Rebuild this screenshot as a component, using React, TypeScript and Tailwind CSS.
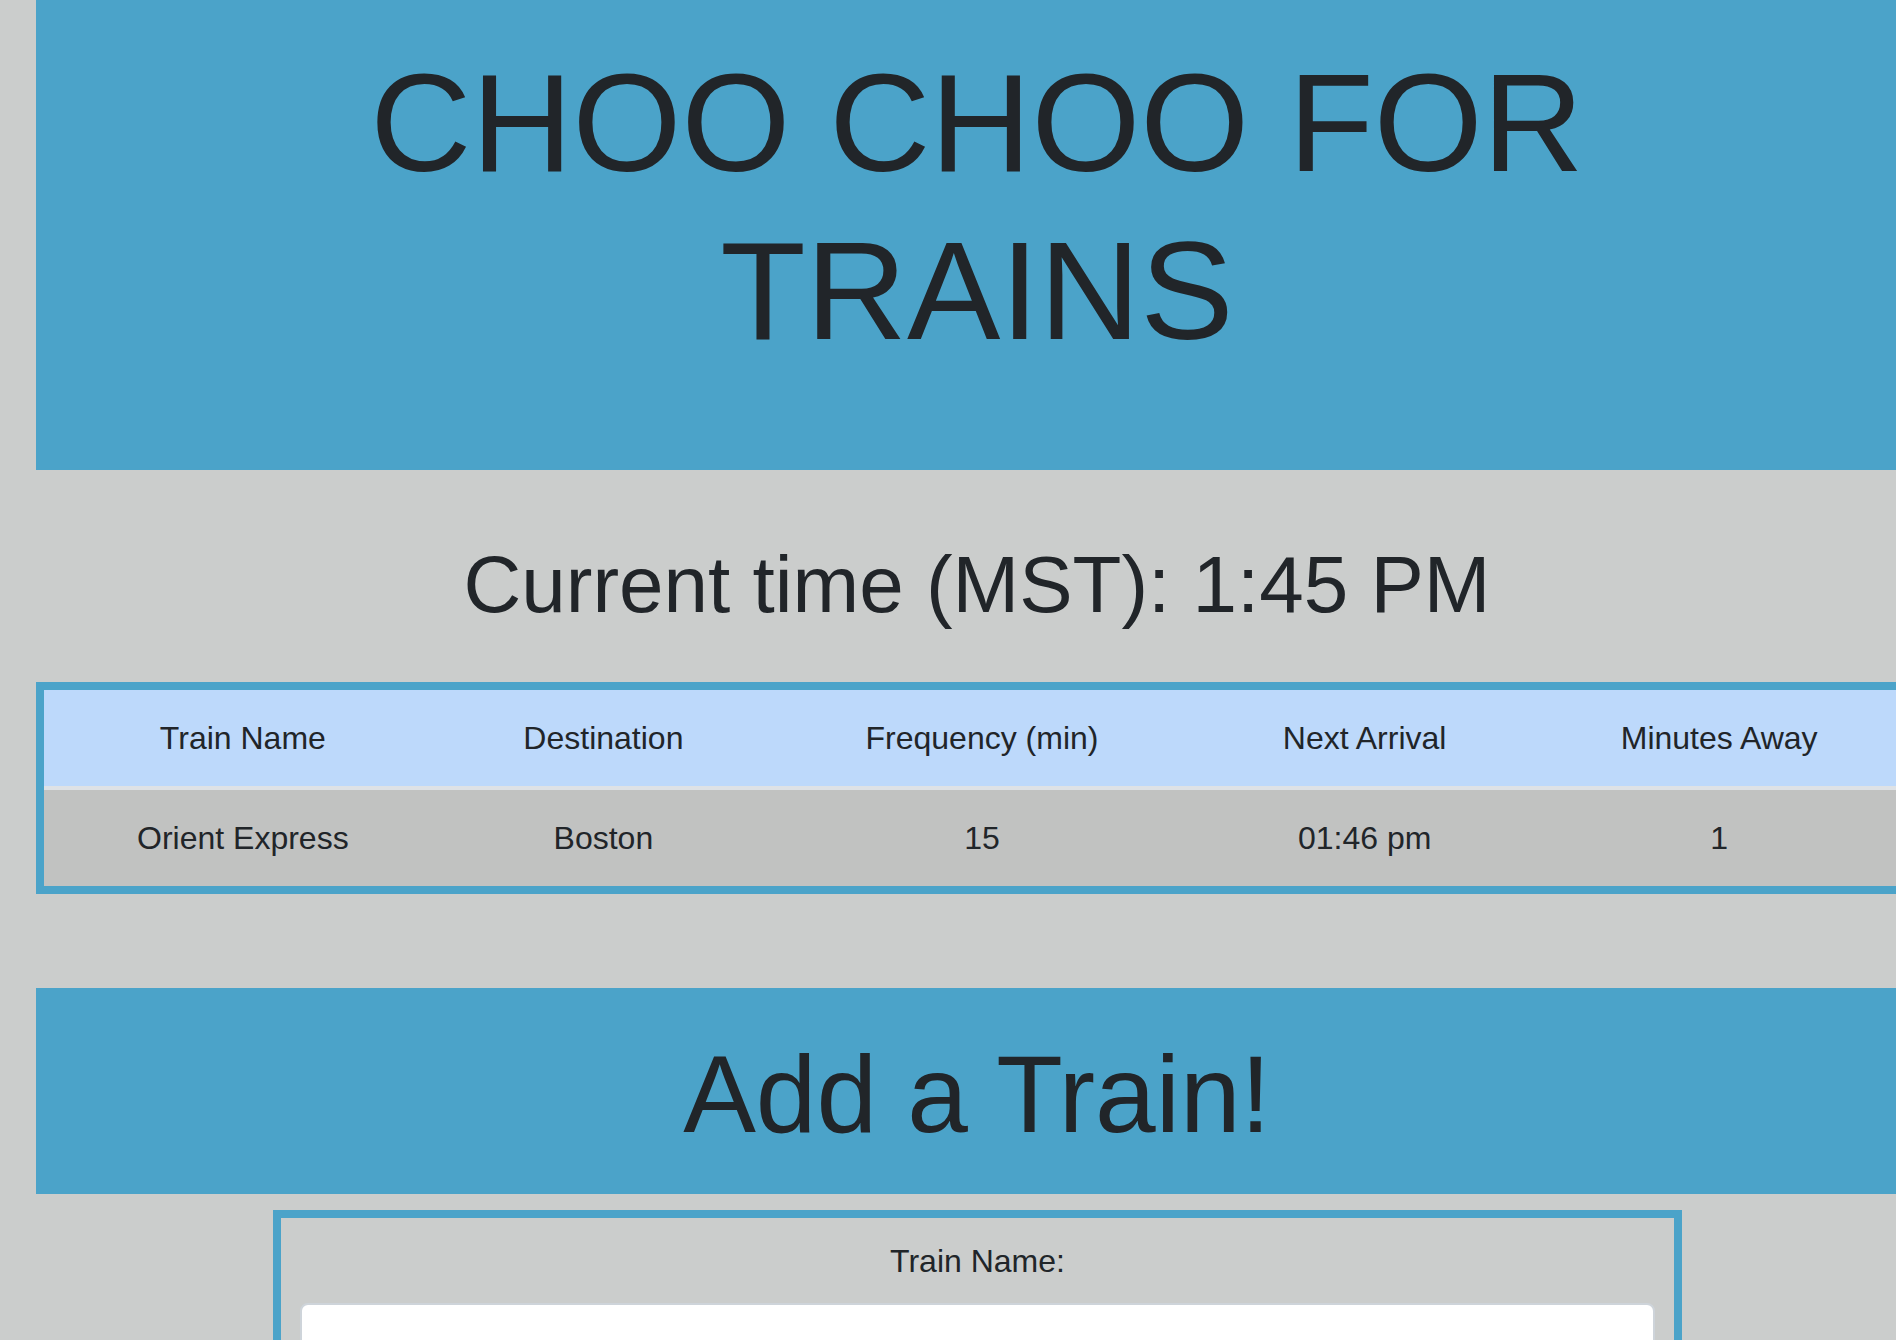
const trains = [
    { name: "Orient Express", destination: "Boston", frequency: "15", next: "01:46 pm", away: "1" },
];

const columns = [
    { label: "Train Name", width: "w-[400px]" },
    { label: "Destination", width: "w-[322px]" },
    { label: "Frequency (min)", width: "w-[432px]" },
    { label: "Next Arrival", width: "w-[330px]" },
    { label: "Minutes Away", width: "w-[380px]" },
];

export default function App() {
    return (
        <div className="min-h-screen overflow-hidden bg-[#cbcdcc] font-['Liberation_Sans',Arial,sans-serif] text-[#212529]">
            <div className="ml-[36px] w-[1882px]">
                <header className="bg-[#4ba3c9] pt-[39px] pb-[95px] text-center">
                    <h1 className="text-[140px] leading-[1.2]">
                        CHOO CHOO FOR
                        <br />
                        TRAINS
                    </h1>
                </header>

                <h2 className="mt-[67px] text-center text-[80px] leading-[1.2]">Current time (MST): 1:45 PM</h2>

                <table className="mt-[49px] w-[1880px] table-fixed border-collapse border-[8px] border-[#4ba3c9] text-center text-[32px] leading-[1.5]">
                    <thead>
                        <tr className="bg-[#bdd9fb]">
                            {columns.map((c) => (
                                <th key={c.label} className={`${c.width} border-b-[4px] border-[#dee2e6] py-[24px] font-normal`}>
                                    {c.label}
                                </th>
                            ))}
                        </tr>
                    </thead>
                    <tbody>
                        {trains.map((t) => (
                            <tr key={t.name} className="bg-[#c1c2c1]">
                                <td className="py-[24px]">{t.name}</td>
                                <td className="py-[24px]">{t.destination}</td>
                                <td className="py-[24px]">{t.frequency}</td>
                                <td className="py-[24px]">{t.next}</td>
                                <td className="py-[24px]">{t.away}</td>
                            </tr>
                        ))}
                    </tbody>
                </table>

                <section className="mt-[94px] h-[206px] bg-[#4ba3c9] pt-[41px] text-center">
                    <h2 className="text-[109px] leading-[1.2]">Add a Train!</h2>
                </section>
            </div>

            <form className="mt-[16px] ml-[273px] w-[1409px] border-[8px] border-[#4ba3c9] px-[19px] pt-[19px] pb-[40px]">
                <label htmlFor="train-name" className="block text-center text-[32px] leading-[1.5]">
                    Train Name:
                </label>
                <input
                    id="train-name"
                    type="text"
                    className="mt-[18px] block h-[76px] w-full rounded-[8px] border-[2px] border-[#ced4da] bg-white px-[24px] text-[32px]"
                />
            </form>
        </div>
    );
}
